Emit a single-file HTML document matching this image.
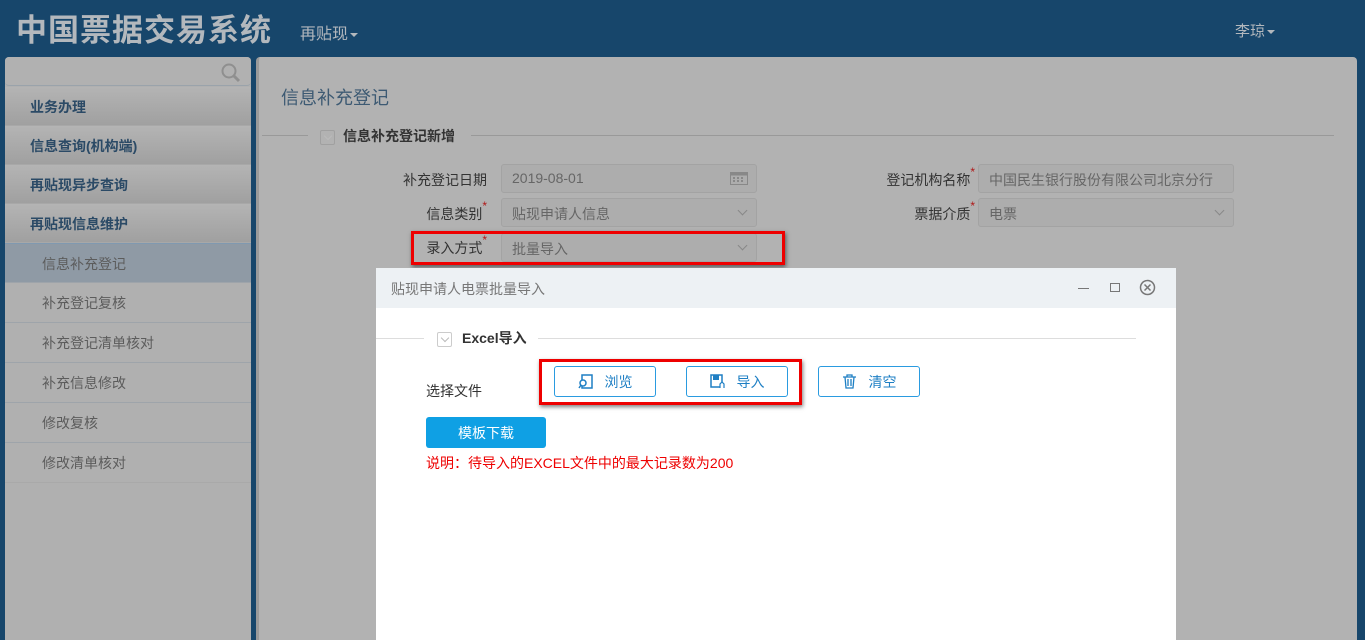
<!DOCTYPE html>
<html><head><meta charset="utf-8"><style>
*{margin:0;padding:0;box-sizing:border-box}
body{width:1365px;height:640px;overflow:hidden;background:#17466b;font-family:"Liberation Sans","Noto Sans CJK SC",sans-serif;position:relative}
.abs{position:absolute}
.title{left:16px;top:5px;font-size:31px;font-weight:bold;color:#b3b8bd;letter-spacing:1px}
.nav{left:300px;top:20px;font-size:16px;color:#b3b8bd}
.user{left:1235px;top:20px;font-size:15px;color:#b3b8bd}
.caret{display:inline-block;width:0;height:0;border-left:4px solid transparent;border-right:4px solid transparent;border-top:4px solid #b3b8bd;vertical-align:middle;margin-left:2px}
.side{left:5px;top:57px;width:246px;height:583px;background:#b0b0b0;border-radius:4px 4px 0 0}
.search{left:0;top:0;width:246px;height:29px;background:#b1b1b1;border-radius:4px;border-bottom:1px solid #9aa3ab}
.mi{position:absolute;left:0;width:246px;height:39px;background:linear-gradient(#b4b4b4,#a0a0a0);font-size:14px;font-weight:bold;color:#2b4a66;padding:10px 0 0 25px;border-bottom:1px solid #a8a8a8}
.si{position:absolute;left:0;width:246px;height:40px;font-size:14px;color:#5c5c5c;padding:10px 0 0 37px;border-bottom:1px solid #9ea4aa}
.main{left:256px;top:57px;width:1101px;height:583px;background:#b2b2b2;border-left:3px solid #9a9a9a;border-radius:4px 4px 0 0}
.lbl{position:absolute;font-size:14px;color:#333;text-align:right}
.star{color:#b01818;font-size:12px;vertical-align:top;position:relative;top:-5px}
.inp{position:absolute;height:29px;border:1px solid #a3a3a3;border-radius:3px;background:#adadad;font-size:14px;color:#666;padding:5px 10px}
.chev{position:absolute;right:10px;top:8px;width:7px;height:7px;border-right:1px solid #888;border-bottom:1px solid #888;transform:rotate(45deg)}
.red{position:absolute;border:3px solid #e00;box-shadow:1px 2px 4px rgba(0,0,0,.5)}
.modal{left:376px;top:268px;width:800px;height:372px;background:#fff;border-radius:3px 3px 0 0}
.mh{height:40px;background:#edf1f4;font-size:14px;color:#777;padding:11px 0 0 15px}
.btn{position:absolute;height:31px;border:1px solid #2a9be0;border-radius:3px;background:#fff;font-size:14px;color:#1e7fc4;text-align:center;padding-top:5px}
.chk{display:inline-block;width:15px;height:15px;border:1px solid #ccc;border-radius:2px;position:relative;vertical-align:middle}
.chk:after{content:"";position:absolute;left:4px;top:2px;width:5px;height:5px;border-right:1px solid #bbb;border-bottom:1px solid #bbb;transform:rotate(45deg)}
</style></head><body>
<div class="abs title">中国票据交易系统</div>
<div class="abs nav">再贴现<span class="caret"></span></div>
<div class="abs user">李琼<span class="caret"></span></div>

<div class="abs side">
 <div class="abs search"><svg class="abs" style="left:215px;top:5px" width="22" height="22" viewBox="0 0 22 22"><circle cx="9" cy="9" r="6.5" fill="none" stroke="#8f8f8f" stroke-width="2"/><path d="M14 14l5 5" stroke="#8f8f8f" stroke-width="3"/></svg></div>
 <div class="mi" style="top:30px">业务办理</div>
 <div class="mi" style="top:69px">信息查询(机构端)</div>
 <div class="mi" style="top:108px">再贴现异步查询</div>
 <div class="mi" style="top:147px">再贴现信息维护</div>
 <div class="si" style="top:186px;background:#8f9aa5;border-top:1px solid #8099b0">信息补充登记</div>
 <div class="si" style="top:226px">补充登记复核</div>
 <div class="si" style="top:266px">补充登记清单核对</div>
 <div class="si" style="top:306px">补充信息修改</div>
 <div class="si" style="top:346px">修改复核</div>
 <div class="si" style="top:386px;border-bottom-color:#a9a9a9">修改清单核对</div>
</div>

<div class="abs main">
 <div class="abs" style="left:22px;top:27px;font-size:18px;color:#3d5a73">信息补充登记</div>
 <div class="abs" style="left:3px;top:78px;width:46px;border-top:1px solid #999"></div>
 <div class="abs" style="left:61px;top:69px;font-size:14px;font-weight:bold;color:#333"><span class="chk" style="border-color:#a0a0a0;margin-right:8px"></span>信息补充登记新增</div>
 <div class="abs" style="left:212px;top:78px;width:863px;border-top:1px solid #999"></div>
</div>

<div class="lbl" style="left:380px;top:170px;width:107px">补充登记日期</div>
<div class="inp" style="left:501px;top:164px;width:256px">2019-08-01<svg class="abs" style="right:8px;top:7px" width="18" height="13"><rect x="0.5" y="0.5" width="17" height="12" fill="none" stroke="#888"/><rect x="0.5" y="0.5" width="17" height="3" fill="#888"/><g fill="#888"><rect x="3" y="5" width="2" height="2"/><rect x="7" y="5" width="2" height="2"/><rect x="11" y="5" width="2" height="2"/><rect x="3" y="8" width="2" height="2"/><rect x="7" y="8" width="2" height="2"/><rect x="11" y="8" width="2" height="2"/></g></svg></div>
<div class="lbl" style="left:380px;top:204px;width:107px">信息类别<span class="star">*</span></div>
<div class="inp" style="left:501px;top:198px;width:256px">贴现申请人信息<span class="chev"></span></div>
<div class="lbl" style="left:380px;top:238px;width:107px">录入方式<span class="star">*</span></div>
<div class="inp" style="left:501px;top:233px;width:256px">批量导入<span class="chev"></span></div>
<div class="red" style="left:411px;top:231px;width:374px;height:34px"></div>

<div class="lbl" style="left:850px;top:170px;width:125px">登记机构名称<span class="star">*</span></div>
<div class="inp" style="left:978px;top:164px;width:256px">中国民生银行股份有限公司北京分行</div>
<div class="lbl" style="left:850px;top:204px;width:125px">票据介质<span class="star">*</span></div>
<div class="inp" style="left:978px;top:198px;width:256px">电票<span class="chev"></span></div>

<div class="abs" style="left:1357px;top:57px;width:8px;height:583px;background:#17466b"></div>

<div class="abs modal">
 <div class="mh">贴现申请人电票批量导入</div>
 <div class="abs" style="left:702px;top:20px;width:11px;border-top:1.5px solid #777"></div>
 <div class="abs" style="left:734px;top:15px;width:10px;height:9px;border:1.5px solid #777"></div>
 <svg class="abs" style="left:763px;top:11px" width="17" height="17"><circle cx="8.5" cy="8.5" r="7" fill="none" stroke="#777" stroke-width="1.5"/><path d="M5.5 5.5l6 6M11.5 5.5l-6 6" stroke="#777" stroke-width="1.5"/></svg>
 <div class="abs" style="left:0;top:70px;width:48px;border-top:1px solid #ddd"></div>
 <div class="abs" style="left:61px;top:60px;font-size:14px;font-weight:bold;color:#333"><span class="chk" style="margin-right:10px"></span>Excel导入</div>
 <div class="abs" style="left:162px;top:70px;width:598px;border-top:1px solid #ddd"></div>
 <div class="abs" style="left:50px;top:113px;font-size:14px;color:#333">选择文件</div>
 <div class="btn" style="left:178px;top:98px;width:102px"><svg style="vertical-align:-2px;margin-right:12px" width="15" height="15"><rect x="4" y="1" width="10" height="13" fill="none" stroke="#1e7fc4" stroke-width="1.5"/><circle cx="5" cy="9" r="3" fill="#fff" stroke="#1e7fc4" stroke-width="1.5"/><path d="M3 11l-2 3" stroke="#1e7fc4" stroke-width="1.5"/></svg>浏览</div>
 <div class="btn" style="left:310px;top:98px;width:102px"><svg style="vertical-align:-2px;margin-right:12px" width="15" height="15"><rect x="1" y="1" width="11" height="12" fill="none" stroke="#1e7fc4" stroke-width="1.5"/><rect x="3" y="1" width="6" height="5" fill="#1e7fc4"/><path d="M10 14v-4l2-2 2 2v4" fill="#fff" stroke="#1e7fc4" stroke-width="1.2"/></svg>导入</div>
 <div class="btn" style="left:442px;top:98px;width:102px"><svg style="vertical-align:-2px;margin-right:12px" width="15" height="15"><path d="M1 3h13M5 3V1h5v2M3 3l1 11h7l1-11M6 5v7M9 5v7" fill="none" stroke="#1e7fc4" stroke-width="1.3"/></svg>清空</div>
 <div class="abs" style="left:50px;top:149px;width:120px;height:31px;background:#0fa0e4;border-radius:3px;color:#fff;font-size:14px;text-align:center;padding-top:6px">模板下载</div>
 <div class="abs" style="left:50px;top:185px;font-size:14px;color:#e00">说明：待导入的EXCEL文件中的最大记录数为200</div>
</div>
<div class="red" style="left:539px;top:359px;width:263px;height:46px"></div>
</body></html>
